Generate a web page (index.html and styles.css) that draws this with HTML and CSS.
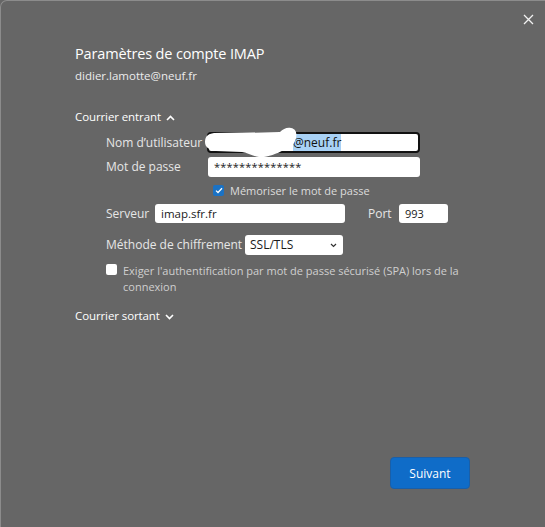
FILE: index.html
```html
<!DOCTYPE html>
<html lang="fr">
<head>
<meta charset="utf-8">
<title>Paramètres de compte IMAP</title>
<link rel="stylesheet" href="styles.css">
</head>
<body>
<div class="window">
  <button class="close" aria-label="Fermer">
    <svg width="11" height="11" viewBox="0 0 11 11"><path d="M1 1L10 10M10 1L1 10" stroke="#f2f2f2" stroke-width="1.3" fill="none"/></svg>
  </button>
  <div class="content">
    <h1 class="title">Paramètres de compte IMAP</h1>
    <div class="account">didier.lamotte@neuf.fr</div>

    <div class="section-head incoming">Courrier entrant
      <svg class="chev" width="9" height="6" viewBox="0 0 9 6"><path d="M1 5L4.5 1.5L8 5" stroke="#fff" stroke-width="1.6" fill="none"/></svg>
    </div>

    <div class="fields">
      <div class="row r-user">
        <span class="label lw1">Nom d’utilisateur</span>
        <div class="input focused user">
          <span class="sel">@neuf.fr</span>
          <svg class="blob" width="96" height="32" viewBox="0 0 96 32"><path d="M1 15C1 9 4 7 10 6L76 5C79 2 83 0 87 1C92 2 93 6 92 11C91 16 88 20 80 23C72 27 62 31 55 30C48 29 44 26 38 25L12 24C5 23 1 20 1 15Z" fill="#fff"/></svg>
        </div>
      </div>
      <div class="row r-pass">
        <span class="label lw1">Mot de passe</span>
        <div class="input pass">**************</div>
      </div>
      <div class="row r-remember">
        <span class="check on"><svg width="8" height="7" viewBox="0 0 8 7"><path d="M1 3.6L3 5.5L7 1.2" stroke="#fff" stroke-width="1.3" fill="none"/></svg></span>
        <span class="small">Mémoriser le mot de passe</span>
      </div>
      <div class="row r-server">
        <span class="label lw2">Serveur</span>
        <div class="input server">imap.sfr.fr</div>
        <span class="label port-label">Port</span>
        <div class="input port">993</div>
      </div>
      <div class="row r-method">
        <span class="label lw3">Méthode de chiffrement</span>
        <div class="select">SSL/TLS
          <svg class="sel-chev" width="7" height="5" viewBox="0 0 7 5"><path d="M1 1L3.5 3.5L6 1" stroke="#333" stroke-width="1.2" fill="none"/></svg>
        </div>
      </div>
      <div class="row r-spa">
        <span class="check off"></span>
        <span class="small dim">Exiger l'authentification par mot de passe sécurisé (SPA) lors de la connexion</span>
      </div>
    </div>

    <div class="section-head outgoing">Courrier sortant
      <svg class="chev" width="9" height="6" viewBox="0 0 9 6"><path d="M1 1L4.5 4.5L8 1" stroke="#fff" stroke-width="1.6" fill="none"/></svg>
    </div>
  </div>
  <div class="footer">
    <button class="primary">Suivant</button>
  </div>
</div>
</body>
</html>
```
FILE: styles.css
```css
* { box-sizing: border-box; }
html, body { margin: 0; padding: 0; }
body {
  background: #666666;
  width: 545px;
  height: 527px;
  overflow: hidden;
  font-family: "Open Sans", "Noto Sans", sans-serif;
  color: #f0f0f0;
}
.window {
  position: relative;
  width: 545px;
  height: 527px;
  border-top: 1px solid #8c8c8c;
  border-left: 1px solid #8c8c8c;
  border-top-left-radius: 7px;
  background: #666666;
  display: flex;
  flex-direction: column;
}
.close {
  position: absolute;
  top: 11px;
  right: 10px;
  width: 14px;
  height: 14px;
  padding: 0;
  border: 0;
  background: transparent;
  display: flex;
  align-items: center;
  justify-content: center;
}
.content {
  padding: 43px 0 0 74px;
  flex: 1;
}
.title {
  margin: 0;
  font-size: 14.5px;
  font-weight: 400;
  color: #ffffff;
  line-height: 20px;
  letter-spacing: -0.15px;
}
.account {
  margin-top: 4px;
  font-size: 11.5px;
  line-height: 16px;
  color: #ececec;
}
.section-head {
  display: flex;
  align-items: center;
  gap: 5px;
  font-size: 11.5px;
  line-height: 16px;
  color: #ffffff;
  letter-spacing: -0.1px;
}
.incoming { margin-top: 25px; }
.outgoing { margin-top: 13px; }
.chev { margin-top: 1px; }
.fields {
  margin-left: 31px;
  margin-top: 7px;
  display: flex;
  flex-direction: column;
}
.row {
  display: flex;
  align-items: center;
}
.label {
  font-size: 12px;
  color: #e6e6e6;
  line-height: 16px;
  white-space: nowrap;
}
.lw1 { width: 101px; }
.lw2 { width: 49px; }
.lw3 { width: 139px; }
.input {
  position: relative;
  height: 19px;
  background: #ffffff;
  border-radius: 3px;
  color: #1a1a1a;
  font-size: 11px;
  line-height: 19px;
  padding-left: 6px;
  white-space: nowrap;
}
.user {
  width: 213px;
  height: 21px;
  border: 2px solid #111;
  border-radius: 4px;
  line-height: 17px;
  padding-left: 84px;
  font-size: 12px;
}
.sel {
  background: #a8d1f5;
  color: #111;
}
.blob {
  position: absolute;
  left: -5px;
  top: -7px;
}
.pass { width: 212px; margin-left: 1px; height: 20px; line-height: 19px; letter-spacing: 0.2px; }
.r-pass { margin-top: 4px; }
.r-remember { margin-top: 6px; margin-left: 107px; gap: 6px; }
.check {
  width: 11px;
  height: 11px;
  border-radius: 2px;
  display: flex;
  align-items: center;
  justify-content: center;
  flex: none;
}
.check.on { background: #1b72c4; }
.check.off { background: #ffffff; }
.small { font-size: 11px; line-height: 15px; color: #dcdcdc; }
.small.dim { color: #cfcfcf; width: 360px; white-space: normal; line-height: 16px; }
.r-server { margin-top: 6px; }
.server { width: 190px; height: 19px; font-size: 11.5px; }
.port-label { margin-left: 23px; width: 31px; }
.port { width: 49px; height: 19px; }
.r-method { margin-top: 12px; }
.select {
  position: relative;
  width: 98px;
  height: 20px;
  background: #fff;
  border-radius: 3px;
  color: #1a1a1a;
  font-size: 12px;
  line-height: 20px;
  padding-left: 5px;
}
.sel-chev { position: absolute; right: 6px; top: 8px; }
.r-spa { margin-top: 8px; align-items: flex-start; gap: 6px; }
.r-spa .check { margin-top: 1px; }
.footer {
  display: flex;
  justify-content: flex-end;
  padding: 0 75px 38px 0;
}
.primary {
  width: 80px;
  height: 32px;
  border: 1px solid #1a5fa8;
  border-radius: 4px;
  background: #0f6cc8;
  color: #ffffff;
  font-family: "Open Sans", "Noto Sans", sans-serif;
  font-size: 12px;
}
```
